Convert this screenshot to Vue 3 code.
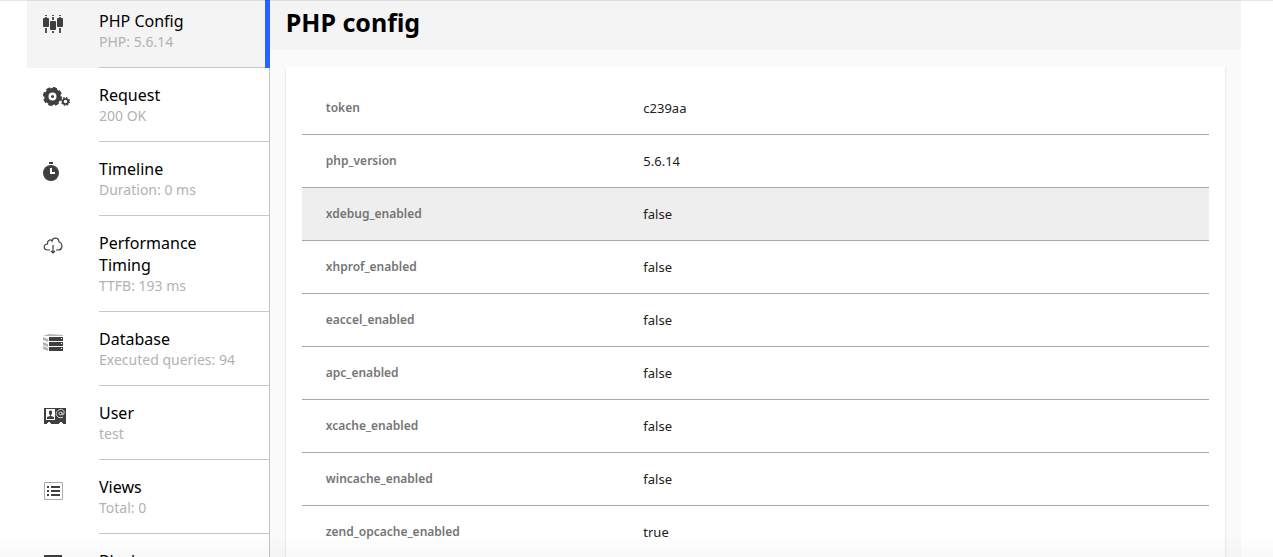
<script setup>
import { ref } from 'vue'

const active = ref('config')

const items = [
  { id: 'config', title: 'PHP Config', note: 'PHP: 5.6.14' },
  { id: 'request', title: 'Request', note: '200 OK' },
  { id: 'timeline', title: 'Timeline', note: 'Duration: 0 ms' },
  { id: 'timing', title: 'Performance Timing', note: 'TTFB: 193 ms' },
  { id: 'database', title: 'Database', note: 'Executed queries: 94' },
  { id: 'user', title: 'User', note: 'test' },
  { id: 'views', title: 'Views', note: 'Total: 0' },
  { id: 'blocks', title: 'Blocks', note: '' }
]

const rows = [
  ['token', 'c239aa'],
  ['php_version', '5.6.14'],
  ['xdebug_enabled', 'false'],
  ['xhprof_enabled', 'false'],
  ['eaccel_enabled', 'false'],
  ['apc_enabled', 'false'],
  ['xcache_enabled', 'false'],
  ['wincache_enabled', 'false'],
  ['zend_opcache_enabled', 'true']
]
</script>

<template>
  <div class="page">
    <nav class="sidebar">
      <a
        v-for="item in items"
        :key="item.id"
        :href="'#' + item.id"
        class="item"
        :class="{ active: item.id === active }"
        @click.prevent="active = item.id"
      >
        <svg class="icon" width="32" height="24" viewBox="0 0 32 24" fill="#3f3f3f" aria-hidden="true">
          <g v-if="item.id === 'config'">
            <path d="M2 3h2v18H2zM9 3h2v18H9zM16 3h2v18h-2z" fill="#555" />
            <rect x="0" y="6" width="6" height="9" rx="1" />
            <rect x="7" y="9" width="6" height="9" rx="1" />
            <rect x="14" y="6" width="6" height="9" rx="1" />
            <path d="M0 4h20v1H0zM0 15h6v1H0zM14 15h6v1h-6zM7 8h6v1H7zM7 18h6v1H7z" fill="#f4f4f4" />
          </g>
          <g v-else-if="item.id === 'request'" fill="none" stroke="#3f3f3f">
            <circle cx="9.500" cy="9.500" r="6.200" stroke-width="4.400" />
            <circle cx="9.500" cy="9.500" r="8.700" stroke-width="1.800" stroke-dasharray="4.200 2.630" />
            <circle cx="9.500" cy="9.500" r="1.500" fill="#3f3f3f" stroke="none" />
            <circle cx="22.500" cy="14.500" r="2.600" stroke-width="1.800" />
            <circle cx="22.500" cy="14.500" r="3.800" stroke-width="1.400" stroke-dasharray="1.600 1.385" />
          </g>
          <g v-else-if="item.id === 'timeline'">
            <rect x="6" y="1" width="4" height="2" />
            <circle cx="8" cy="12" r="8" />
            <path d="M7 7h2v4h3v2H7z" fill="#fff" />
          </g>
          <g v-else-if="item.id === 'timing'" fill="none" stroke="#3f3f3f" stroke-width="1.200">
            <path d="M7 15H5C0 15 0 9 4.500 9C4 5 8 4 9 6C10 2 16 2 16 7C20 8 20 15 15 15H13" />
            <path d="M10 10v8M8 16l2 2 2-2" />
          </g>
          <g v-else-if="item.id === 'database'">
            <path d="M0 5l6-2 14 1v1L6 5zM0 6l5 2v3l-5-2zM0 11l5 2v3l-5-2zM0 15l5 2v3l-5-2z" fill="#b5b5b5" />
            <path d="M6 6h14v4H6zM6 11h14v4H6zM6 16h14v4H6z" />
            <path d="M18 7h1v1h-1zM18 12h1v1h-1zM18 17h1v1h-1z" fill="#fff" />
          </g>
          <g v-else-if="item.id === 'user'">
            <rect x="1" y="3" width="22" height="16" />
            <path d="M3 4h9v11H3zM5 17h2v2H5zM17 17h2v2h-2zM4 18h4v1H4zM16 18h4v1h-4z" fill="#fff" />
            <path d="M6 6q1.500-1 3 0v3L8 10v1l3 1v2H4v-2l3-1v-1L6 9z" />
            <g fill="none" stroke="#d4d4d4">
              <circle cx="17.500" cy="8.500" r="1.500" />
              <path d="M19 7v2q0 1.500 1.500.5C23 5 18 3 15 5.500S13 11 16 12.500q2 .8 4-.5" />
            </g>
          </g>
          <g v-else-if="item.id === 'views'">
            <path d="M1.500 3.500h18v17h-18z" fill="#fff" stroke="#aaa" />
            <path d="M4 7h2v2H4zM4 11h2v2H4zM4 15h2v2H4zM8 7h9v2H8zM8 11h9v2H8zM8 15h9v2H8z" />
          </g>
          <rect v-else x="1" y="2" width="18" height="18" />
        </svg>
        <span class="label">
          <span class="title">{{ item.title }}</span>
          <span class="note">{{ item.note }}</span>
        </span>
      </a>
    </nav>
    <main class="content">
      <header class="heading"><h1>PHP config</h1></header>
      <section class="card">
        <table>
          <tbody>
            <tr v-for="[name, value] in rows" :key="name" :class="{ marked: name === 'xdebug_enabled' }">
              <th scope="row">{{ name }}</th>
              <td>{{ value }}</td>
            </tr>
          </tbody>
        </table>
      </section>
    </main>
    <div class="shade"></div>
  </div>
</template>

<style>
body {
  background: #fff;
}
</style>

<style scoped>
.page {
  display: flex;
  height: 100vh;
  overflow: hidden;
  box-sizing: border-box;
  padding: 0 32px 0 27px;
  font-family: "Noto Sans", sans-serif;
  color: #000;
}
.sidebar {
  flex: 0 0 20%;
  box-sizing: border-box;
  border-right: 1px solid #c4c4c4;
}
.item {
  display: flex;
  padding-left: 16px;
  color: inherit;
  text-decoration: none;
}
.item.active {
  margin-right: -1px;
  background: #f4f4f4;
  border-right: 5px solid #2962ff;
}
.icon {
  flex: none;
  margin: 19px 24px 0 0;
}
.label {
  flex: 1;
  padding: 16px 0 15px;
  border-bottom: 1px solid #c8c8c8;
}
.item:first-child .icon {
  margin-top: 12px;
}
.item:first-child .label {
  padding-top: 10px;
}
.title,
.note {
  display: block;
}
.title {
  max-width: 140px;
  font-size: 16px;
  line-height: 22px;
}
.note {
  min-height: 20px;
  font-size: 14px;
  line-height: 20px;
  color: #b2b2b2;
}
.content {
  flex: 1;
  background: #fafafa;
}
.heading {
  padding: 6px 16px 12px;
  background: #f4f4f4;
}
h1 {
  margin: 0;
  font-size: 25px;
  line-height: 32px;
  font-weight: 700;
}
.card {
  margin: 16px;
  padding: 16px;
  background: #fff;
  box-shadow: 0 2px 2px rgba(0, 0, 0, 0.16);
}
table {
  width: 100%;
  table-layout: fixed;
  border-collapse: separate;
  border-spacing: 0;
}
th,
td {
  height: 53px;
  box-sizing: border-box;
  padding: 0 24px;
  border-bottom: 1px solid #a8a8a8;
  text-align: left;
  vertical-align: middle;
  line-height: 18px;
}
th {
  width: 35%;
  font-size: 12px;
  font-weight: 600;
  color: #757575;
}
td {
  font-size: 13px;
  color: #212121;
}
.marked {
  background: #eee;
}
.shade {
  position: fixed;
  inset: 0;
  pointer-events: none;
  border-top: 1px solid rgba(0, 0, 0, 0.07);
  background: linear-gradient(transparent calc(100% - 24px), rgba(0, 0, 0, 0.024));
}
</style>
